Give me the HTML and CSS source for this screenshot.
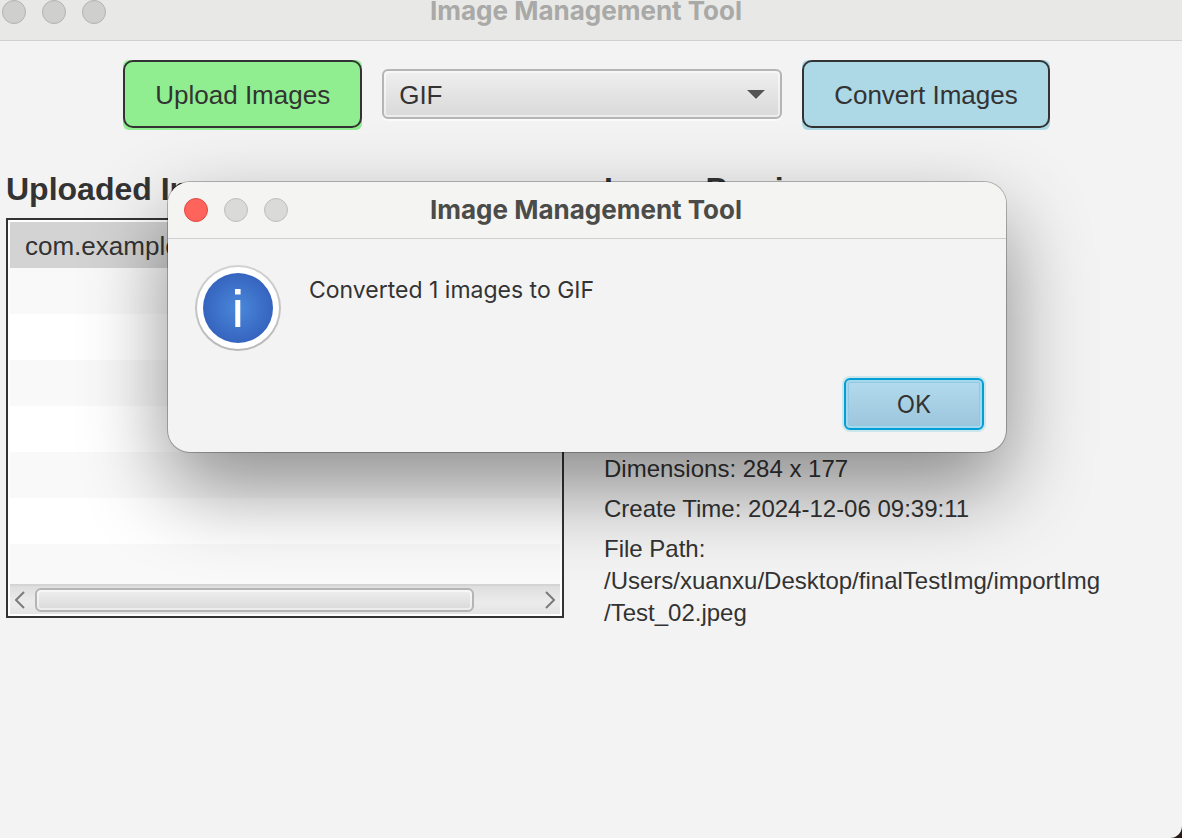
FILE: index.html
```html
<!DOCTYPE html>
<html lang="en">
<head>
<meta charset="utf-8">
<title>Image Management Tool</title>
<link rel="stylesheet" href="styles.css">
</head>
<body>
<div class="window">
  <header class="titlebar">
    <div class="lights"><span class="light"></span><span class="light"></span><span class="light"></span></div>
    <h1 class="window-title">Image Management Tool</h1>
  </header>

  <div class="toolbar">
    <button class="action action-upload" type="button">Upload Images</button>
    <div class="combo">
      <select class="combo-select" aria-label="Target format">
        <option>GIF</option>
      </select>
      <svg class="combo-arrow" viewBox="0 0 18 10" aria-hidden="true"><path class="arrow-glow" d="M0 1h18L9 10z"/><path class="arrow-fill" d="M0 0h18L9 9z"/></svg>
    </div>
    <button class="action action-convert" type="button">Convert Images</button>
  </div>

  <main class="panels">
    <section class="panel">
      <h2 class="panel-title">Uploaded Images</h2>
      <div class="list">
        <ul class="rows">
          <li class="row row-selected">com.example</li>
          <li class="row"></li>
          <li class="row"></li>
          <li class="row"></li>
          <li class="row"></li>
          <li class="row"></li>
          <li class="row"></li>
          <li class="row"></li>
        </ul>
        <div class="scrollbar">
          <button class="scroll-step" type="button" aria-label="Scroll left"><svg class="chevron" viewBox="0 0 10 18" aria-hidden="true"><path d="M9 1L1 9l8 8"/></svg></button>
          <div class="track"><div class="thumb"></div></div>
          <button class="scroll-step" type="button" aria-label="Scroll right"><svg class="chevron" viewBox="0 0 10 18" aria-hidden="true"><path d="M1 1l8 8-8 8"/></svg></button>
        </div>
      </div>
    </section>
    <section class="panel">
      <h2 class="panel-title">Image Preview</h2>
      <div class="preview"></div>
      <div class="details">
        <p class="detail">Dimensions: 284 x 177</p>
        <p class="detail">Create Time: 2024-12-06 09:39:11</p>
        <p class="detail">File Path:<br>/Users/xuanxu/Desktop/finalTestImg/importImg<wbr>/Test_02.jpeg</p>
      </div>
    </section>
  </main>

  <div class="dialog" role="dialog" aria-labelledby="dialog-title">
    <header class="dialog-bar">
      <div class="lights"><span class="light light-close"></span><span class="light"></span><span class="light"></span></div>
      <h2 class="window-title" id="dialog-title">Image Management Tool</h2>
    </header>
    <div class="dialog-body">
      <svg class="info" viewBox="0 0 86 86" aria-hidden="true">
        <defs>
          <radialGradient id="blue"><stop offset="0" stop-color="#4a88da"/><stop offset="1" stop-color="#3664bf"/></radialGradient>
          <linearGradient id="rim" x1="0" y1="0" x2="0" y2="1"><stop offset="0" stop-color="#d2d2d2"/><stop offset="1" stop-color="#b8b8b8"/></linearGradient>
        </defs>
        <circle cx="43" cy="43" r="43" fill="url(#rim)"/>
        <circle cx="43" cy="43" r="41" fill="#fff"/>
        <circle cx="43" cy="43" r="35" fill="url(#blue)"/>
        <path d="M40 24h5.6v5.6H40zM40.3 35h5v27h-5z" fill="#fff"/>
      </svg>
      <p class="message">Converted 1 images to GIF</p>
    </div>
    <footer class="dialog-actions"><button class="ok" type="button">OK</button></footer>
  </div>
</div>
</body>
</html>
```
FILE: styles.css
```css
* {
  box-sizing: border-box;
}

body {
  margin: 0;
  background: #2a1a16;
  color: #333;
  font-family: "Liberation Sans", Arial, sans-serif;
  font-size: 26px;
}

h1, h2, p, ul {
  margin: 0;
  padding: 0;
}

button, select {
  font: inherit;
  color: inherit;
}

.window {
  position: relative;
  min-height: 100vh;
  overflow: hidden;
  background: #f3f3f3;
  border-bottom-right-radius: 12px;
}

.titlebar {
  display: grid;
  grid-template-columns: 1fr auto 1fr;
  align-items: start;
  height: 41px;
  padding: 0 12px 0 2px;
  background: #e8e8e6;
  border-bottom: 1px solid #cfcfcf;
}

.titlebar .window-title {
  color: #a9a9a7;
  line-height: 22px;
}

.lights {
  display: flex;
  gap: 16px;
}

.light {
  width: 24px;
  height: 24px;
  border: 1px solid #b2b2b0;
  border-radius: 50%;
  background: #cfcfcd;
}

.dialog .light {
  background: #dadad8;
  border-color: #bebebc;
}

.dialog .light-close {
  background: #fe645b;
  border-color: #e1483f;
}

.window-title {
  color: #4b4b49;
  font-family: Inter, sans-serif;
  font-size: 26px;
  font-weight: 700;
  line-height: 32px;
}

.toolbar {
  display: flex;
  align-items: center;
  justify-content: center;
  gap: 20px;
  padding: 19px 9px 0 0;
}

.action {
  position: relative;
  height: 70px;
  padding: 0 32px;
  border: 0;
  border-radius: 6px;
}

/* Outline drawn inside the filled area, leaving a thin strip below it */
.action::after {
  content: "";
  position: absolute;
  inset: 0 0 2px;
  border: 2px solid #333;
  border-radius: 10px;
}

.action-upload {
  background: #90ee90;
}

.action-convert {
  background: #add8e6;
}

.combo {
  position: relative;
  width: 400px;
  margin-bottom: 2px;
}

.combo-select {
  appearance: none;
  display: block;
  width: 100%;
  height: 50px;
  padding: 2px 15px 0;
  border: 2px solid #b5b5b5;
  border-radius: 6px;
  background: linear-gradient(#efefef, #d9d9d9);
  box-shadow: inset 0 0 0 2px rgba(255, 255, 255, 0.5), 0 2px 0 #fafafa;
}

.combo-arrow {
  position: absolute;
  top: 21px;
  right: 17px;
  width: 18px;
  height: 10px;
  pointer-events: none;
}

.arrow-glow {
  fill: #f6f6f6;
}

.arrow-fill {
  fill: #555;
}

.panels {
  display: grid;
  grid-template-columns: 1fr 1fr;
  gap: 40px;
  padding: 39px 20px 0 6px;
}

.panel {
  min-width: 0;
}

.panel-title {
  font-size: 32px;
  line-height: 40px;
}

.list {
  margin-top: 9px;
  padding: 2px;
  border: 2px solid #333;
  background: #fff;
}

.rows {
  height: 362px;
  overflow: hidden;
  list-style: none;
}

.row {
  height: 46px;
  padding-left: 15px;
  line-height: 48px;
}

.row:nth-child(even) {
  background: #f9f9f9;
}

.row-selected {
  background: #d3d3d3;
}

.scrollbar {
  display: flex;
  align-items: center;
  height: 30px;
  border-top: 2px solid #d4d4d4;
  background: linear-gradient(#dedede, #ececec 60%, #e4e4e4);
}

.scroll-step {
  display: flex;
  padding: 0 5px;
  border: 0;
  background: none;
}

.chevron {
  width: 10px;
  height: 18px;
  fill: none;
  stroke: #7c7c7c;
  stroke-width: 2;
}

.scroll-step + .track {
  margin-left: 5px;
}

.track {
  flex: 1;
}

.thumb {
  width: 87%;
  height: 24px;
  border: 2px solid #b5b5b5;
  border-radius: 6px;
  background: linear-gradient(#efefef, #d9d9d9);
  box-shadow: inset 0 0 0 2px rgba(255, 255, 255, 0.5);
}

.preview {
  height: 244px;
}

.details {
  display: grid;
  gap: 8px;
  max-width: 520px;
}

.detail {
  font-size: 24px;
  line-height: 32px;
}

.dialog {
  position: absolute;
  top: 182px;
  left: 168px;
  width: 838px;
  border-radius: 22px;
  background: #f3f3f3;
  box-shadow: 0 0 0 1px rgba(0, 0, 0, 0.25), 0 36px 84px rgba(0, 0, 0, 0.44);
}

.dialog-bar {
  display: grid;
  grid-template-columns: 1fr auto 1fr;
  align-items: center;
  height: 57px;
  padding: 0 18px 0 16px;
  border-bottom: 1px solid #cfcfcf;
  border-radius: 22px 22px 0 0;
  background: #f4f4f2;
}

.dialog-body {
  display: flex;
  gap: 28px;
  padding: 26px 27px 0;
}

.info {
  width: 86px;
  height: 86px;
}

.message {
  padding-top: 9px;
  font-family: Inter, sans-serif;
  font-size: 23px;
  line-height: 32px;
}

.dialog-actions {
  display: flex;
  justify-content: flex-end;
  padding: 27px 22px 22px;
}

.ok {
  width: 140px;
  height: 52px;
  border: 2px solid #039ed3;
  border-radius: 6px;
  background: linear-gradient(#b4dcf0, #9cc4da);
  box-shadow: 0 0 0 2px #cce6ee, inset 0 0 0 2px #a4d8ee, inset 0 0 0 3px #93c8e0;
  font-family: Inter, sans-serif;
  font-size: 24px;
}
```
